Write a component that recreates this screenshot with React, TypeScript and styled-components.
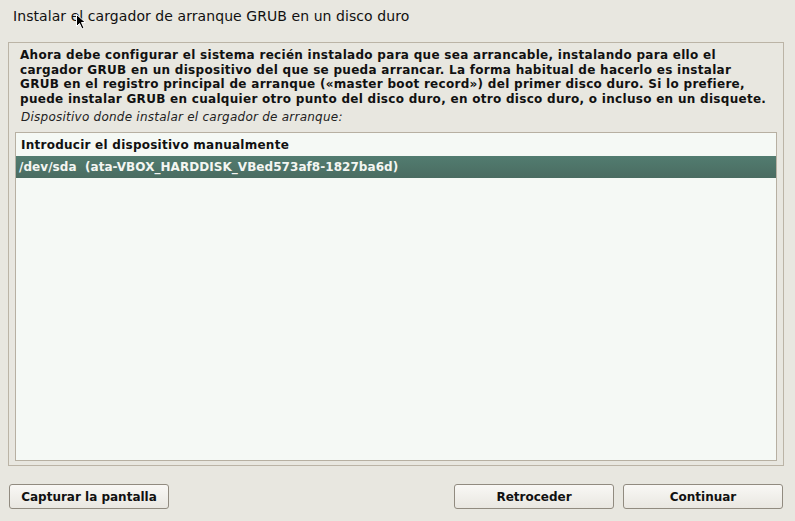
import React from "react";
import styled, { createGlobalStyle } from "styled-components";

const Global = createGlobalStyle`
  html, body { margin: 0; padding: 0; background: #e8e7e0; }
  body { font-family: "DejaVu Sans", "Liberation Sans", sans-serif; color: #111; }
`;

const Page = styled.div`
  width: 795px;
  height: 521px;
  display: flex;
  flex-direction: column;
  background: #e8e7e0;
  position: relative;
  overflow: hidden;
`;

const Title = styled.div`
  height: 34px;
  box-sizing: border-box;
  padding: 8px 0 0 13px;
  font-size: 14px;
  letter-spacing: 0.07px;
  color: #111;
`;

const Panel = styled.div`
  margin: 8px 11px 0 8px;
  height: 424px;
  box-sizing: border-box;
  border: 1px solid #bbb4a6;
  display: flex;
  flex-direction: column;
  padding: 5px 6px 4px 6px;
`;

const Para = styled.p`
  margin: 0 0 0 5px;
  font-size: 12px;
  font-weight: bold;
  letter-spacing: 0.29px;
  line-height: 14.5px;
  color: #111;
`;

const Label = styled.div`
  margin: 4px 0 0 6px;
  font-size: 12px;
  font-style: italic;
  letter-spacing: 0.24px;
  color: #222;
  height: 16px;
`;

const List = styled.div`
  margin-top: 6px;
  flex: 1;
  border: 1px solid #b7b0a2;
  background: #f5f9f5;
  padding-top: 1px;
`;

const Row = styled.div<{ $selected?: boolean }>`
  height: 22px;
  display: flex;
  align-items: center;
  padding-left: ${(p) => (p.$selected ? 3 : 5)}px;
  font-size: 12px;
  font-weight: bold;
  letter-spacing: ${(p) => (p.$selected ? 0.05 : 0.25)}px;
  white-space: pre;
  color: ${(p) => (p.$selected ? "#f4f6f2" : "#111")};
  background: ${(p) =>
    p.$selected ? "linear-gradient(#527c70, #4a6c61)" : "transparent"};
`;

const Footer = styled.div`
  flex: 1;
  display: flex;
  align-items: center;
  padding: 0 12px 0 9px;
  gap: 9px;
`;

const Spacer = styled.div`
  flex: 1;
`;

const Button = styled.button`
  width: 160px;
  height: 25px;
  margin-top: 6px;
  box-sizing: border-box;
  border: 1px solid #918b80;
  border-radius: 3px;
  background: linear-gradient(#f9f8f5, #e9e7e1);
  font-family: "DejaVu Sans", "Liberation Sans", sans-serif;
  font-size: 12px;
  font-weight: bold;
  color: #111;
  padding: 0;
`;

const Cursor = styled.svg`
  position: absolute;
  left: 76px;
  top: 14px;
`;

export default function App() {
  return (
    <Page>
      <Global />
      <Title>Instalar el cargador de arranque GRUB en un disco duro</Title>
      <Panel>
        <Para>
          Ahora debe configurar el sistema recién instalado para que sea arrancable, instalando para ello el
          <br />
          cargador GRUB en un dispositivo del que se pueda arrancar. La forma habitual de hacerlo es instalar
          <br />
          GRUB en el registro principal de arranque («master boot record») del primer disco duro. Si lo prefiere,
          <br />
          puede instalar GRUB en cualquier otro punto del disco duro, en otro disco duro, o incluso en un disquete.
        </Para>
        <Label>Dispositivo donde instalar el cargador de arranque:</Label>
        <List>
          <Row>Introducir el dispositivo manualmente</Row>
          <Row $selected>/dev/sda  (ata-VBOX_HARDDISK_VBed573af8-1827ba6d)</Row>
        </List>
      </Panel>
      <Footer>
        <Button>Capturar la pantalla</Button>
        <Spacer />
        <Button>Retroceder</Button>
        <Button>Continuar</Button>
      </Footer>
      <Cursor width="10" height="16" viewBox="0 0 10 16">
        <path d="M0.5 0.5 L0.5 12.5 L3.5 9.5 L6 15 L8 14 L5.5 8.5 L9.5 8.5 Z" fill="#000" stroke="#fff" strokeWidth="1" />
      </Cursor>
    </Page>
  );
}
